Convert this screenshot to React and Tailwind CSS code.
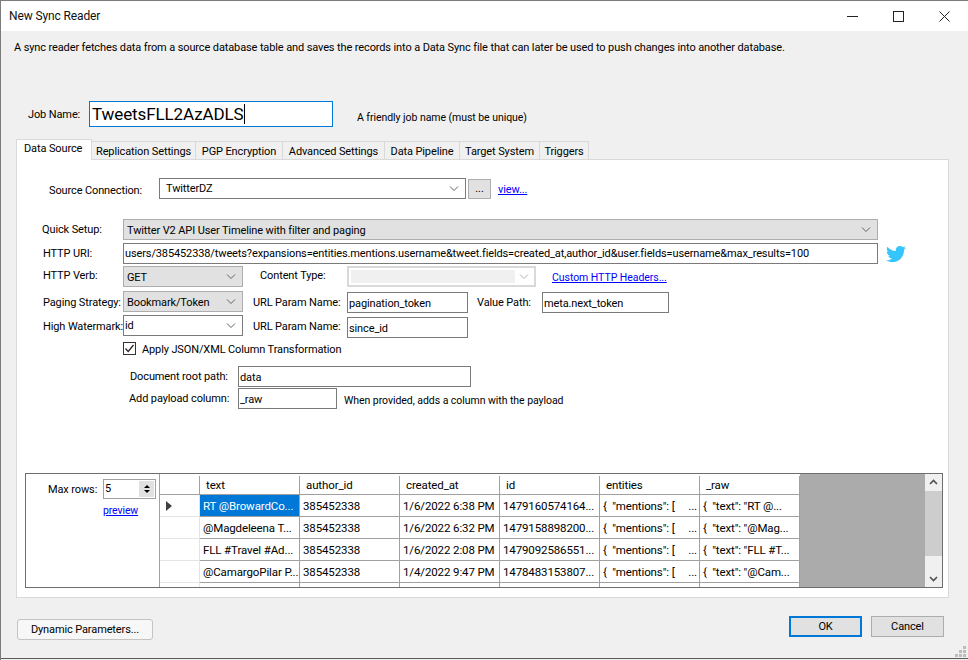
import { FaTwitter } from 'react-icons/fa';

const Chevron = ({ color = '#606060' }) => (
  <svg width="10" height="6" viewBox="0 0 10 6" fill="none" stroke={color} strokeWidth="1">
    <path d="M1 .5 5 4.5 9 .5" />
  </svg>
);

const Label = ({ className = '', children }) => (
  <span className={`shrink-0 whitespace-nowrap pt-[2px] ${className}`}>{children}</span>
);

const TextBox = ({ className = '', children, border = 'border-[#7a7a7a]' }) => (
  <div className={`shrink-0 h-[21px] border bg-white px-[1px] pt-[2px] leading-[18px] whitespace-nowrap overflow-hidden ${border} ${className}`}>
    {children}
  </div>
);

const Select = ({ className = '', children, white, textClass = 'pt-[4px]' }) => (
  <div className={`shrink-0 h-[21px] border flex items-center justify-between pl-[3px] pr-[6px] ${white ? 'bg-white border-[#7a7a7a]' : 'bg-[#e1e1e1] border-[#adadad]'} ${className}`}>
    <span className={`whitespace-nowrap ${textClass}`}>{children}</span>
    <Chevron />
  </div>
);

const tabs = [
  ['Replication Settings', 'w-[104px]'],
  ['PGP Encryption', 'w-[87px]'],
  ['Advanced Settings', 'w-[102px]'],
  ['Data Pipeline', 'w-[75px]'],
  ['Target System', 'w-[80px]'],
  ['Triggers', 'w-[49px]'],
];

const columns = ['text', 'author_id', 'created_at', 'id', 'entities', '_raw'];

const rows = [
  ['RT @BrowardCo...', '385452338', '1/6/2022 6:38 PM', '1479160574164...', '{  "mentions": [     ...', '{  "text": "RT @...'],
  ['@Magdeleena T...', '385452338', '1/6/2022 6:32 PM', '1479158898200...', '{  "mentions": [     ...', '{  "text": "@Mag...'],
  ['FLL #Travel #Ad...', '385452338', '1/6/2022 2:08 PM', '1479092586551...', '{  "mentions": [     ...', '{  "text": "FLL #T...'],
  ['@CamargoPilar P...', '385452338', '1/4/2022 9:47 PM', '1478483153807...', '{  "mentions": [     ...', '{  "text": "@Cam...'],
];

function DataGrid() {
  return (
    <div className="flex-1 min-w-0 flex overflow-hidden bg-[#ababab] text-[11.5px]">
      <div className="w-[640px] shrink-0 bg-white">
        <div className="flex h-[21px] border-t-2 border-white">
          <div className="w-[40px] border-r border-b border-[#a0a0a0]" />
          {columns.map((c) => (
            <div key={c} className="w-[100px] pl-[6px] border-r border-b border-[#a0a0a0] leading-[18px]">{c}</div>
          ))}
        </div>
        {rows.map((r, i) => (
          <div key={r[0]} className="flex h-[22px]">
            <div className="w-[40px] border-r border-b border-[#e4e4e4] flex items-center pl-[6px]">
              {i === 0 && <div className="border-y-[5px] border-l-[6px] border-y-transparent border-l-[#404040]" />}
            </div>
            {r.map((v, j) => (
              <div
                key={j}
                className={`w-[100px] pl-[3px] border-r border-b border-[#a0a0a0] leading-[23px] whitespace-pre overflow-hidden ${i === 0 && j === 0 ? 'bg-[#0078d7] text-white' : ''}`}
              >
                {v}
              </div>
            ))}
          </div>
        ))}
        <div className="flex h-[6px]">
          <div className="w-[40px] border-r border-[#e4e4e4]" />
          {columns.map((c) => (
            <div key={c} className="w-[100px] border-r border-[#a0a0a0]" />
          ))}
        </div>
      </div>
      <div className="flex-1" />
      <div className="w-[17px] shrink-0 bg-[#f0f0f0] flex flex-col items-center justify-between py-[5px] relative">
        <svg width="9" height="6" viewBox="0 0 9 6" fill="none" stroke="#505050" strokeWidth="1.6"><path d="M1 5 4.500 1.500 8 5" /></svg>
        <div className="absolute left-0 right-0 top-[17px] h-[65px] bg-[#cdcdcd]" />
        <svg width="9" height="6" viewBox="0 0 9 6" fill="none" stroke="#505050" strokeWidth="1.6"><path d="M1 1 4.500 4.500 8 1" /></svg>
      </div>
    </div>
  );
}

export default function App() {
  return (
    <div
      className="relative w-[968px] h-[660px] overflow-hidden bg-[#f0f0f0] text-[11px] tracking-[-0.12px] text-black border-t border-l border-[#7c7c7c] flex flex-col"
      style={{ fontFamily: 'Roboto, sans-serif' }}
    >
      {/* title bar */}
      <div className="h-[30px] shrink-0 bg-white flex items-center justify-between pl-[8px]">
        <span className="text-[12px] text-[#111]">New Sync Reader</span>
        <div className="flex items-center pr-[1px]">
          <div className="w-[46px] h-[30px] flex items-center justify-center">
            <svg width="11" height="11" viewBox="0 0 11 11" stroke="#222"><path d="M0 5.500h11" /></svg>
          </div>
          <div className="w-[46px] h-[30px] flex items-center justify-center">
            <svg width="11" height="11" viewBox="0 0 11 11" fill="none" stroke="#222"><rect x=".5" y=".5" width="10" height="10" /></svg>
          </div>
          <div className="w-[46px] h-[30px] flex items-center justify-center">
            <svg width="11" height="11" viewBox="0 0 11 11" stroke="#222"><path d="M.5.5l10 10M10.500.5l-10 10" /></svg>
          </div>
        </div>
      </div>

      <p className="mt-[9px] ml-[13px] leading-[16px] whitespace-nowrap">
        A sync reader fetches data from a source database table and saves the records into a Data Sync file that can later be used to push changes into another database.
      </p>

      {/* job name */}
      <div className="mt-[45px] ml-[27px] flex items-center h-[26px]">
        <Label className="w-[61px]">Job Name:</Label>
        <div className="w-[244px] h-[26px] border border-[#0078d7] bg-white text-[17px] tracking-[-0.1px] leading-[24px] pl-[2px] flex items-center">
          <span>TweetsFLL2AzADLS</span>
          <span className="w-px h-[20px] bg-black" />
        </div>
        <Label className="ml-[24px] mt-[5px] text-[10.5px] tracking-[-0.05px]">A friendly job name (must be unique)</Label>
      </div>

      {/* tabs */}
      <div className="mt-[12px] ml-[15px] flex items-end h-[20px]">
        <div className="w-[76px] h-[21px] -mb-px z-10 bg-white border border-b-0 border-[#d9d9d9] pl-[7px] leading-[17px]">Data Source</div>
        {tabs.map(([t, w]) => (
          <div key={t} className={`${w} h-[18px] bg-[#f0f0f0] border-r border-t border-[#d9d9d9] text-center leading-[19px] whitespace-nowrap`}>{t}</div>
        ))}
      </div>

      {/* tab page */}
      <div className="ml-[15px] w-[933px] h-[439px] bg-white border border-[#d9d9d9] shrink-0 flex flex-col">
        <div className="mt-[18px] ml-[32px] h-[21px] flex items-center">
          <Label className="w-[110px] !pt-[5px]">Source Connection:</Label>
          <Select white className="w-[307px] border-[#7a7a7a]" textClass="pt-[2px] pl-[3px]">TwitterDZ</Select>
          <div className="ml-[2px] w-[23px] h-[20px] mt-[1px] bg-[#e1e1e1] border border-[#adadad] text-center leading-[18px]">...</div>
          <a className="ml-[7px] mt-[3px] text-[#0000ff] underline">view...</a>
        </div>

        <div className="mt-[20px] ml-[25px] flex items-center">
          <Label className="w-[81px]">Quick Setup:</Label>
          <Select className="w-[755px]">Twitter V2 API User Timeline with filter and paging</Select>
        </div>
        <div className="mt-[3px] ml-[26px] flex items-center">
          <Label className="w-[80px]">HTTP URI:</Label>
          <TextBox className="w-[755px] !pt-[1px]">users/385452338/tweets?expansions=entities.mentions.username&amp;tweet.fields=created_at,author_id&amp;user.fields=username&amp;max_results=100</TextBox>
          <FaTwitter className="ml-[8px] text-[#36c5fb]" size={20} />
        </div>
        <div className="mt-[2px] ml-[26px] flex items-center">
          <Label className="w-[80px] !pt-0">HTTP Verb:</Label>
          <Select className="w-[120px]">GET</Select>
          <Label className="ml-[17px] w-[87px] !pt-0">Content Type:</Label>
          <div className="shrink-0 w-[189px] h-[21px] border-2 border-[#d9d9d9] bg-white flex items-center justify-between pr-[5px]">
            <div className="w-[168px] h-full bg-[#f0f0f0] border-2 border-white" />
            <Chevron color="#b0b0b0" />
          </div>
          <a className="ml-[16px] mt-[2px] text-[10.5px] tracking-[-0.05px] text-[#0000ff] underline">Custom HTTP Headers...</a>
        </div>
        <div className="mt-[4px] ml-[26px] flex items-start">
          <Label className="w-[80px] mt-[2px]">Paging Strategy:</Label>
          <Select className="w-[120px]">Bookmark/Token</Select>
          <Label className="ml-[10px] w-[94px] mt-[2px]">URL Param Name:</Label>
          <TextBox className="w-[121px] mt-[1px]">pagination_token</TextBox>
          <Label className="ml-[9px] w-[65px] mt-[2px]">Value Path:</Label>
          <TextBox className="w-[127px] mt-[1px]">meta.next_token</TextBox>
        </div>
        <div className="mt-[2px] ml-[26px] flex items-start">
          <Label className="w-[80px] mt-[2px]">High Watermark:</Label>
          <Select white className="w-[120px] !pl-[1px]" textClass="pt-[2px]">id</Select>
          <Label className="ml-[10px] w-[94px] mt-[2px]">URL Param Name:</Label>
          <TextBox className="w-[121px] mt-[2px]">since_id</TextBox>
        </div>
        <div className="mt-[2px] ml-[106px] h-[17px] flex items-center">
          <div className="w-[13px] h-[13px] border border-[#333] flex items-center justify-center">
            <svg width="11" height="11" viewBox="0 0 11 11" fill="none" stroke="#222" strokeWidth="1.2"><path d="M1.500 5.500 4.200 8.500 9.500 2" /></svg>
          </div>
          <Label className="ml-[6px] !pt-[3px]">Apply JSON/XML Column Transformation</Label>
        </div>
        <div className="mt-[9px] ml-[113px] flex items-center">
          <Label className="w-[108px]">Document root path:</Label>
          <TextBox className="w-[233px]">data</TextBox>
        </div>
        <div className="mt-[1px] ml-[112px] flex items-center">
          <Label className="w-[109px]">Add payload column:</Label>
          <TextBox className="w-[99px]">_raw</TextBox>
          <Label className="ml-[7px] !pt-[4px] text-[10.5px] tracking-[-0.05px]">When provided, adds a column with the payload</Label>
        </div>

        {/* preview grid */}
        <div className="mt-[64px] ml-[8px] w-[918px] h-[115px] border border-[#6e6e6e] bg-white flex">
          <div className="w-[134px] shrink-0 border-r border-[#a0a0a0] flex flex-col pl-[22px] pt-[5px]">
            <div className="flex items-center">
              <Label className="w-[55px]">Max rows:</Label>
              <div className="w-[53px] h-[20px] border border-[#a0a0a0] flex items-center justify-between pl-[1px] pr-[1px]">
                <span>5</span>
                <div className="w-[15px] h-[16px] bg-[#e1e1e1] flex flex-col items-center justify-center gap-[2px]">
                  <div className="border-x-[3px] border-b-[3px] border-x-transparent border-b-black" />
                  <div className="border-x-[3px] border-t-[3px] border-x-transparent border-t-black" />
                </div>
              </div>
            </div>
            <a className="ml-[55px] mt-[4px] text-[10.5px] text-[#0000ff] underline">preview</a>
          </div>
          <DataGrid />
        </div>
      </div>

      {/* footer buttons */}
      <div className="mt-[18px] ml-[16px] w-[927px] flex items-start justify-between">
        <div className="mt-[3px] w-[136px] h-[21px] rounded-[3px] border border-[#c4c4c4] bg-[#f7f7f7] text-center leading-[19px]">Dynamic Parameters...</div>
        <div className="flex gap-[9px]">
          <div className="w-[73px] h-[21px] border-2 border-[#0078d7] bg-[#e1e1e1] text-center leading-[17px]">OK</div>
          <div className="w-[73px] h-[21px] border border-[#adadad] bg-[#e1e1e1] text-center leading-[19px]">Cancel</div>
        </div>
      </div>
      {/* resize grip */}
      <svg className="absolute right-[2px] bottom-[3px]" width="11" height="11" viewBox="0 0 11 11" fill="#bdbdbd">
        <path d="M8 0h3v3H8zM4 4h3v3H4zM8 4h3v3H8zM0 8h3v3H0zM4 8h3v3H4zM8 8h3v3H8z" />
      </svg>
      <div className="absolute left-0 right-0 bottom-[1px] h-px bg-[#5a5a5a]" />
    </div>
  );
}
